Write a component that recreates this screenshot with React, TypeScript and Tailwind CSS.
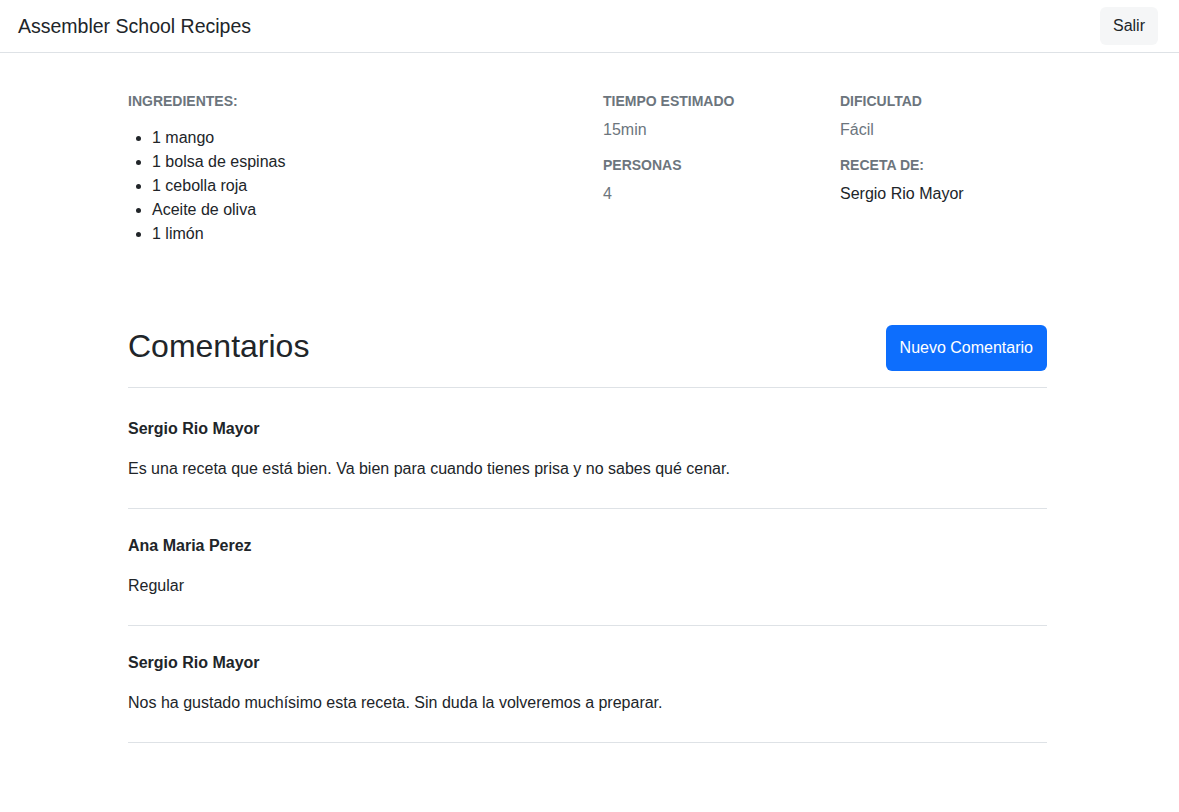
import * as React from 'react';

const ingredients = ['1 mango', '1 bolsa de espinas', '1 cebolla roja', 'Aceite de oliva', '1 limón'];

const comments = [
  {
    author: 'Sergio Rio Mayor',
    text: 'Es una receta que está bien. Va bien para cuando tienes prisa y no sabes qué cenar.',
  },
  { author: 'Ana Maria Perez', text: 'Regular' },
  {
    author: 'Sergio Rio Mayor',
    text: 'Nos ha gustado muchísimo esta receta. Sin duda la volveremos a preparar.',
  },
];

function Label({ children }: { children: React.ReactNode }) {
  return (
    <h6 className="text-[14px] font-bold uppercase leading-[20px] text-[#6c757d]">{children}</h6>
  );
}

export default function App() {
  return (
    <div className="min-h-[812px] bg-white text-[16px] text-[#212529] font-['Liberation_Sans',Arial,sans-serif]">
      {/* Navbar */}
      <nav className="flex h-[53px] items-center justify-between border-b border-[#dee2e6] pl-[18px] pr-[21px]">
        <span className="text-[19.5px] leading-[24px] text-[#212529]">Assembler School Recipes</span>
        <button className="h-[38px] rounded-[6px] bg-[#f5f6f7] px-[13px] text-[16px] text-[#212529]">
          Salir
        </button>
      </nav>

      <main className="ml-[128px] w-[919px] pt-[38px]">
        {/* Recipe info */}
        <section className="flex">
          <div className="w-[475px]">
            <Label>Ingredientes:</Label>
            <ul className="mt-[15px] list-disc pl-[24px] leading-[24px]">
              {ingredients.map((i) => (
                <li key={i}>{i}</li>
              ))}
            </ul>
          </div>
          <div className="w-[237px]">
            <Label>Tiempo estimado</Label>
            <p className="mt-[7px] leading-[24px] text-[#6c757d]">15min</p>
            <div className="mt-[13px]">
              <Label>Personas</Label>
              <p className="mt-[7px] leading-[24px] text-[#6c757d]">4</p>
            </div>
          </div>
          <div className="flex-1">
            <Label>Dificultad</Label>
            <p className="mt-[7px] leading-[24px] text-[#6c757d]">Fácil</p>
            <div className="mt-[13px]">
              <Label>Receta de:</Label>
              <p className="mt-[7px] leading-[24px]">Sergio Rio Mayor</p>
            </div>
          </div>
        </section>

        {/* Comments */}
        <section className="mt-[79px]">
          <div className="mb-[4px] flex items-center justify-between border-b border-[#dee2e6] pb-[16px]">
            <h2 className="mb-[5px] text-[32px] font-medium leading-[40px]">Comentarios</h2>
            <button className="h-[46px] rounded-[6px] bg-[#0d6efd] px-[14px] text-[16px] text-white">
              Nuevo Comentario
            </button>
          </div>
          {comments.map((c, idx) => (
            <div key={idx} className="border-b border-[#dee2e6] pt-[25px] pb-[27px]">
              <p className="font-bold leading-[24px]">{c.author}</p>
              <p className="mt-[16px] leading-[24px]">{c.text}</p>
            </div>
          ))}
        </section>
      </main>
    </div>
  );
}
